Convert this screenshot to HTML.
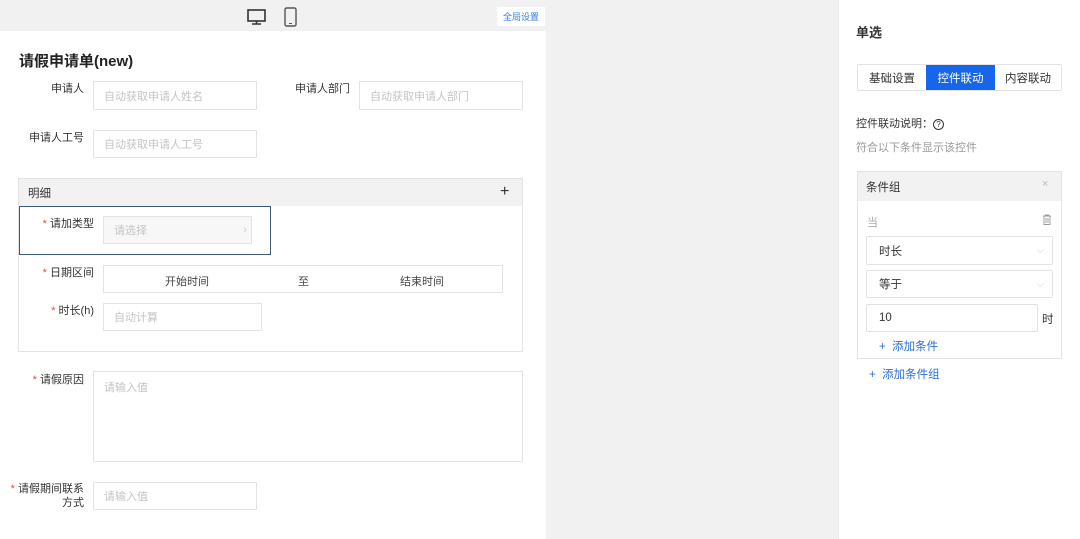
<!DOCTYPE html>
<html><head><meta charset="utf-8"><style>
*{box-sizing:border-box;margin:0;padding:0}
body{width:1080px;height:539px;position:relative;overflow:hidden;background:#f1f1f1;font-family:"Liberation Sans","Noto Sans CJK SC",sans-serif;color:#333;font-size:12px}
.a{position:absolute}
.in{position:absolute;border:1px solid #e3e3e3;background:#fff;color:#c4c4c4;font-size:11px;padding-left:10px;display:flex;align-items:center}
.lb{position:absolute;font-size:11px;color:#333;text-align:right;white-space:nowrap}
.st{color:#e0484b}
.sel{position:absolute;border:1px solid #e2e2e2;background:#fff;font-size:11.5px;color:#333;padding-left:12px;display:flex;align-items:center;border-radius:2px}
</style></head><body>
<div class="a" style="left:0;top:0;width:546px;height:31px;background:#f1f1f1"></div>
<svg class="a" style="left:247px;top:9px" width="19" height="16" viewBox="0 0 19 16"><rect x="1" y="1" width="17" height="11" fill="none" stroke="#333" stroke-width="1.6"/><path d="M9.5 12v3M5 15h9" stroke="#333" stroke-width="1.6"/></svg>
<svg class="a" style="left:284px;top:7px" width="13" height="20" viewBox="0 0 13 20"><rect x="1" y="1" width="11" height="18" rx="1.5" fill="none" stroke="#555" stroke-width="1.4"/><path d="M5 16.5h3" stroke="#555"/></svg>
<div class="a" style="left:497px;top:7px;width:48px;height:19px;background:#fff;color:#3a7be0;font-size:9px;display:flex;align-items:center;justify-content:center">全局设置</div>
<div class="a" style="left:0;top:31px;width:546px;height:508px;background:#fff"></div>
<div class="a" style="left:19px;top:50px;font-size:15px;font-weight:bold;color:#222">请假申请单(new)</div>
<div class="lb" style="left:30px;top:80px;width:54px">申请人</div>
<div class="in" style="left:93px;top:81px;width:164px;height:29px">自动获取申请人姓名</div>
<div class="lb" style="left:290px;top:80px;width:60px">申请人部门</div>
<div class="in" style="left:359px;top:81px;width:164px;height:29px">自动获取申请人部门</div>
<div class="lb" style="left:20px;top:129px;width:64px">申请人工号</div>
<div class="in" style="left:93px;top:130px;width:164px;height:28px">自动获取申请人工号</div>
<div class="a" style="left:18px;top:178px;width:505px;height:174px;border:1px solid #e3e3e3"></div>
<div class="a" style="left:19px;top:179px;width:503px;height:27px;background:#f2f2f2"></div>
<div class="a" style="left:28px;top:185px;font-size:11.5px">明细</div>
<div class="a" style="left:500px;top:183px;font-size:16px;color:#333">+</div>
<div class="a" style="left:19px;top:206px;width:252px;height:49px;border:1px solid #3a5a7e"></div>
<div class="lb" style="left:30px;top:215px;width:64px"><span class="st">* </span>请加类型</div>
<div class="in" style="left:103px;top:216px;width:149px;height:28px;background:#f7f7f7">请选择<span style="position:absolute;right:4px;color:#ccc">›</span></div>
<div class="lb" style="left:30px;top:264px;width:64px"><span class="st">* </span>日期区间</div>
<div class="a" style="left:103px;top:265px;width:400px;height:28px;border:1px solid #e3e3e3;font-size:11px;color:#444"><span class="a" style="left:61px;top:7px">开始时间</span><span class="a" style="left:194px;top:7px">至</span><span class="a" style="left:296px;top:7px">结束时间</span></div>
<div class="lb" style="left:30px;top:302px;width:64px"><span class="st">* </span>时长(h)</div>
<div class="in" style="left:103px;top:303px;width:159px;height:28px">自动计算</div>
<div class="lb" style="left:20px;top:371px;width:64px"><span class="st">* </span>请假原因</div>
<div class="in" style="left:93px;top:371px;width:430px;height:91px;align-items:flex-start;padding-top:7px">请输入值</div>
<div class="lb" style="left:0px;top:482px;width:84px;line-height:14px"><span class="st">* </span>请假期间联系<br>方式</div>
<div class="in" style="left:93px;top:482px;width:164px;height:28px">请输入值</div>
<div class="a" style="left:838px;top:0;width:242px;height:539px;background:#fff;border-left:1px solid #e8e8e8"></div>
<div class="a" style="left:856px;top:22px;font-size:13px;font-weight:bold">单选</div>
<div class="a" style="left:857px;top:64px;width:205px;height:27px;border:1px solid #e3e3e3;border-radius:2px;display:flex;font-size:11.5px">
<div style="width:68px;display:flex;align-items:center;justify-content:center">基础设置</div>
<div style="width:69px;display:flex;align-items:center;justify-content:center;background:#1765e8;color:#fff">控件联动</div>
<div style="flex:1;display:flex;align-items:center;justify-content:center">内容联动</div></div>
<div class="a" style="left:856px;top:115px;font-size:11px">控件联动说明：<span style="display:inline-block;width:11px;height:11px;border:1px solid #333;border-radius:50%;font-size:8px;text-align:center;line-height:9px">?</span></div>
<div class="a" style="left:856px;top:139px;font-size:11px;color:#999">符合以下条件显示该控件</div>
<div class="a" style="left:857px;top:171px;width:205px;height:188px;border:1px solid #e3e3e3"></div>
<div class="a" style="left:858px;top:172px;width:203px;height:29px;background:#f2f2f2"></div>
<div class="a" style="left:866px;top:179px;font-size:11.5px">条件组</div>
<div class="a" style="left:1042px;top:178px;font-size:11px;color:#bbb">×</div>
<div class="a" style="left:867px;top:214px;font-size:11px;color:#aaa">当</div>
<svg class="a" style="left:1042px;top:214px" width="10" height="11" viewBox="0 0 10 11"><path d="M1 2h8M3.5 2V1h3v1M2 2.5v8h6v-8M4 4v5M6 4v5" fill="none" stroke="#999" stroke-width="0.9"/></svg>
<div class="sel" style="left:866px;top:236px;width:187px;height:29px">时长<span style="position:absolute;right:8px;color:#ccc;font-size:10px">⌵</span></div>
<div class="sel" style="left:866px;top:270px;width:187px;height:28px">等于<span style="position:absolute;right:8px;color:#ccc;font-size:10px">⌵</span></div>
<div class="sel" style="left:866px;top:304px;width:172px;height:28px">10</div>
<div class="a" style="left:1042px;top:311px;font-size:11.5px">时</div>
<div class="a" style="left:879px;top:338px;font-size:11.5px;color:#2b6fd6">+&nbsp; 添加条件</div>
<div class="a" style="left:869px;top:366px;font-size:11.5px;color:#2b6fd6">+&nbsp; 添加条件组</div>
</body></html>
